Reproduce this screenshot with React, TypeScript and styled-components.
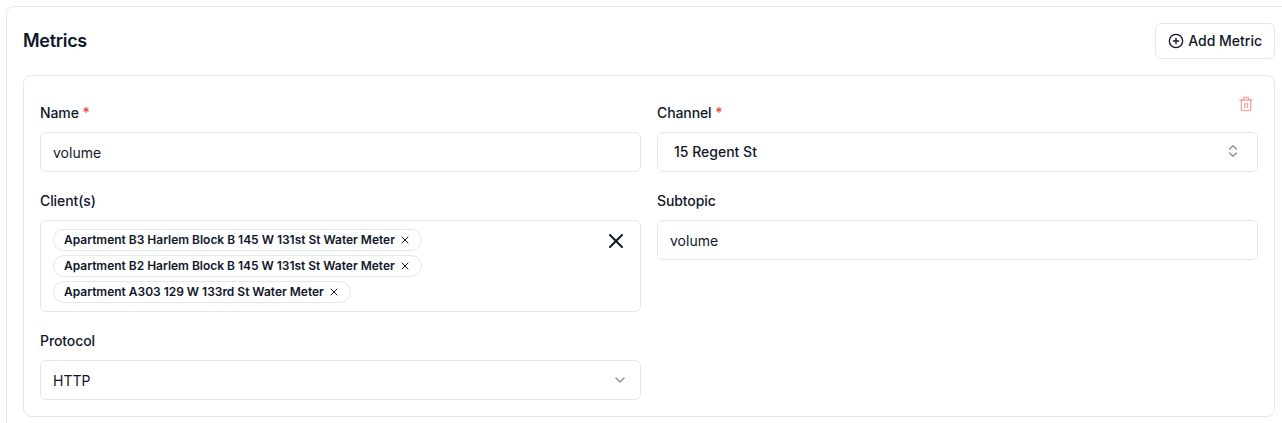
import React, { FC } from "react";
import styled, { createGlobalStyle } from "styled-components";
import { ChevronDown, ChevronsUpDown, CirclePlus, Trash2, X } from "lucide-react";

const GlobalStyle = createGlobalStyle`
  html, body {
    margin: 0;
    height: 423px;
    overflow: hidden;
    background: #fff;
    font-family: Inter, "Liberation Sans", sans-serif;
    color: #0f172a;
  }
`;

const Page = styled.div`
  padding: 6px 0 0 6px;
  width: 1286px;
`;

const Panel = styled.section`
  border: 1px solid #e2e8f0;
  border-radius: 8px;
  padding: 16px;
  background: #fff;
`;

const PanelHeader = styled.header`
  display: flex;
  align-items: center;
  justify-content: space-between;
  margin-bottom: 16px;
`;

const Title = styled.h2`
  margin: 0;
  font-size: 18px;
  line-height: 28px;
  font-weight: 600;
  letter-spacing: -0.3px;
`;

const AddButton = styled.button`
  display: flex;
  align-items: center;
  gap: 4px;
  height: 36px;
  padding: 0 12px;
  background: #fff;
  border: 1px solid #e2e8f0;
  border-radius: 6px;
  font: 500 14px/20px Inter, sans-serif;
  color: #0f172a;
`;

const MetricCard = styled.div`
  position: relative;
  display: grid;
  grid-template-columns: 1fr 1fr;
  column-gap: 16px;
  row-gap: 19px;
  align-items: start;
  padding: 27px 16px 16px;
  border: 1px solid #e2e8f0;
  border-radius: 8px;
`;

const DeleteButton = styled.button`
  position: absolute;
  top: 20px;
  right: 20px;
  display: flex;
  padding: 0;
  border: 0;
  background: none;
  color: #ef4444;
  opacity: 0.5;
`;

const Field = styled.div`
  display: flex;
  flex-direction: column;
  min-width: 0;
`;

const Label = styled.label`
  font-size: 14px;
  line-height: 20px;
  font-weight: 500;
  letter-spacing: -0.1px;
  margin-bottom: 9px;
`;

const Required = styled.span`
  color: #ef4444;
`;

const Control = styled.div`
  display: flex;
  align-items: center;
  justify-content: space-between;
  height: 40px;
  box-sizing: border-box;
  padding: 0 12px;
  border: 1px solid #e2e8f0;
  border-radius: 6px;
  font-size: 14px;
  color: #0f172a;
  svg {
    color: #71717a;
    opacity: 0.8;
    flex: none;
  }
`;

// the channel picker sits a little higher and further in than the plain inputs
const ChannelControl = styled(Control)`
  padding: 0 16px 2px;
  font-weight: 500;
  svg {
    margin-top: 0;
  }
`;

const MultiBox = styled.div`
  display: flex;
  justify-content: space-between;
  align-items: flex-start;
  height: 92px;
  box-sizing: border-box;
  padding: 8px 12px;
  border: 1px solid #e2e8f0;
  border-radius: 6px;
`;

const ChipList = styled.div`
  display: flex;
  flex-direction: column;
  align-items: flex-start;
  gap: 4px;
`;

const Chip = styled.span`
  display: inline-flex;
  align-items: center;
  gap: 4px;
  height: 22px;
  box-sizing: border-box;
  padding: 0 10px;
  border: 1px solid #e2e8f0;
  border-radius: 999px;
  font-size: 12px;
  font-weight: 600;
  line-height: 16px;
  letter-spacing: -0.015px;
  white-space: nowrap;
`;

const ClearButton = styled.button`
  display: flex;
  margin: 0 0 0 auto;
  padding: 0;
  border: 0;
  background: none;
  color: #0f172a;
`;

const clients = [
  "Apartment B3 Harlem Block B 145 W 131st St Water Meter",
  "Apartment B2 Harlem Block B 145 W 131st St Water Meter",
  "Apartment A303 129 W 133rd St Water Meter",
];

const App: FC = () => (
  <Page>
    <GlobalStyle />
    <Panel>
      <PanelHeader>
        <Title>Metrics</Title>
        <AddButton>
          <CirclePlus size={16} />
          Add Metric
        </AddButton>
      </PanelHeader>
      <MetricCard>
        <DeleteButton aria-label="Delete metric">
          <Trash2 size={16} />
        </DeleteButton>
        <Field>
          <Label>
            Name <Required>*</Required>
          </Label>
          <Control>volume</Control>
        </Field>
        <Field>
          <Label>
            Channel <Required>*</Required>
          </Label>
          <ChannelControl>
            15 Regent St
            <ChevronsUpDown size={16} />
          </ChannelControl>
        </Field>
        <Field>
          <Label>Client(s)</Label>
          <MultiBox>
            <ChipList>
              {clients.map((client) => (
                <Chip key={client}>
                  {client}
                  <X size={12} />
                </Chip>
              ))}
            </ChipList>
            <ClearButton aria-label="Clear clients">
              <X size={24} />
            </ClearButton>
          </MultiBox>
        </Field>
        <Field>
          <Label>Subtopic</Label>
          <Control>volume</Control>
        </Field>
        <Field>
          <Label>Protocol</Label>
          <Control>
            HTTP
            <ChevronDown size={16} />
          </Control>
        </Field>
      </MetricCard>
    </Panel>
  </Page>
);

export default App;
